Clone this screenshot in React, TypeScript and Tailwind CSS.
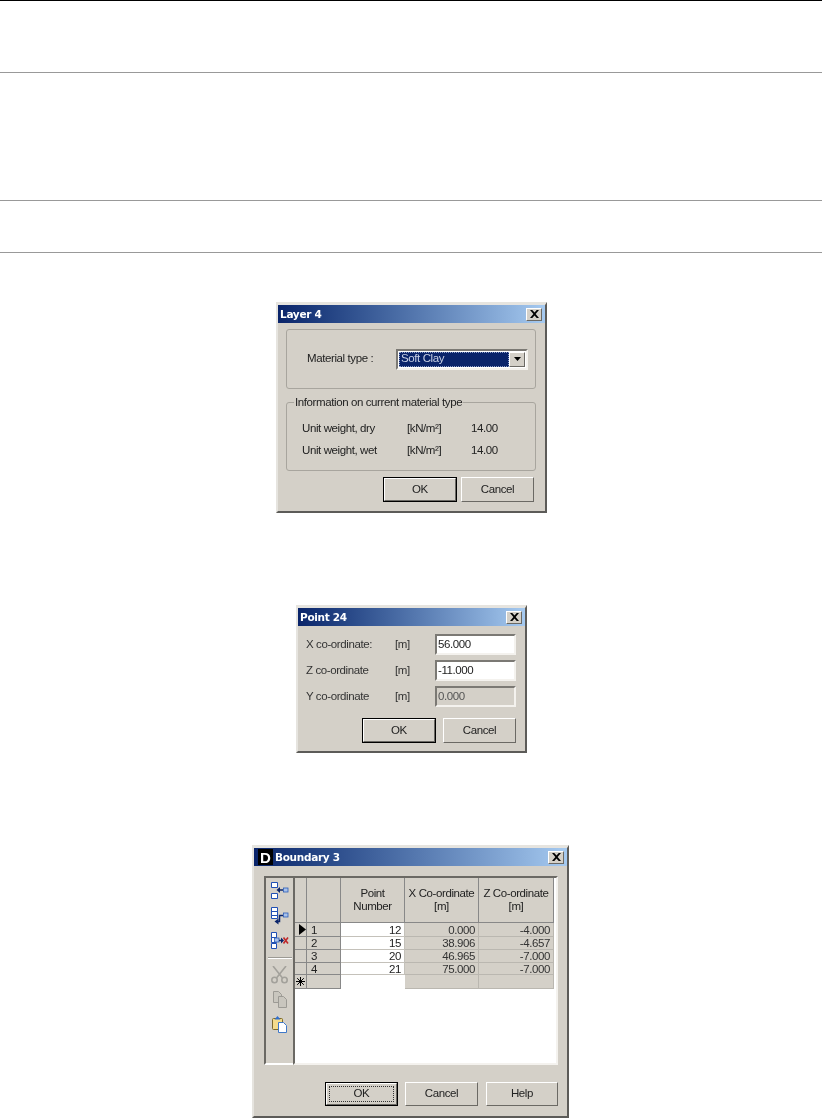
const face = "font-['Liberation_Sans',Arial,sans-serif] blur-[0.4px]";
const label = "text-[11.5px] leading-none tracking-[-0.4px]";

// classic win2k raised / sunken edges
const raised =
  "border border-t-white border-l-white border-r-[#6b6964] border-b-[#6b6964] bg-[#d4d0c8]";
const sunken =
  "border-2 border-t-[#7b7974] border-l-[#7b7974] border-r-[#f4f2ee] border-b-[#f4f2ee]";
const frame =
  "border-2 border-t-[3px] border-t-[#e6e4df] border-l-[#e6e4df] border-r-[#5c5b58] border-b-[#5c5b58] bg-[#d4d0c8]";

const Rule = ({ className }: { className: string }) => (
  <div className={`h-px bg-[#999999] ${className}`} />
);

const TitleBar = ({ title, logo }: { title: string; logo?: boolean }) => (
  <div className={`flex h-[18px] items-center bg-gradient-to-r from-[#0a246a] to-[#a6caf0] pr-[3px] ${logo ? "pl-[4px]" : "pl-[2px]"}`}>
    {logo && (
      <span className="mr-[2px] flex h-[16px] w-[15px] items-center justify-center bg-black text-[15px] font-bold leading-none text-white">
        D
      </span>
    )}
    <span className="flex-1 font-['DejaVu_Sans',Verdana,sans-serif] text-[10.5px] font-bold leading-none tracking-[-0.3px] text-white">
      {title}
    </span>
    <span className={`flex h-[13px] w-[16px] items-center justify-center ${raised}`}>
      <svg width="9" height="8" viewBox="0 0 8 7">
        <path d="M0 0l2 0 2 2.200 2-2.200 2 0-3 3.500 3 3.500-2 0-2-2.200-2 2.200-2 0 3-3.500z" fill="#000" />
      </svg>
    </span>
  </div>
);

const Button = ({ text, className, isDefault, focus }: { text: string; className: string; isDefault?: boolean; focus?: boolean }) => (
  <div className={`text-[#222] ${label} ${className} ${isDefault ? "border border-black" : ""}`}>
    <div className={`flex h-full w-full items-center justify-center ${raised}`}>
      {focus ? (
        <div className="flex h-[16px] w-[65px] items-center justify-center border border-dotted border-[#333]">{text}</div>
      ) : (
        text
      )}
    </div>
  </div>
);

const Field = ({ value, disabled }: { value: string; disabled?: boolean }) => (
  <div
    className={`flex h-[21px] w-[81px] items-center pl-[1px] ${sunken} ${
      disabled ? "bg-[#d4d0c8] text-[#555]" : "bg-white text-[#222]"
    }`}
  >
    {value}
  </div>
);

const LayerDialog = () => (
  <div className={`ml-[276px] mt-[49px] h-[211px] w-[271px] ${frame} ${face}`}>
    <TitleBar title="Layer 4" />
    <div className={`pl-2 pr-[9px] pt-[6px] text-[#222] ${label}`}>
      <div className="flex h-[60px] items-center rounded-[3px] border border-[#a8a59e] pl-[20px] pr-[7px]">
        <span className="w-[89px]">Material type :</span>
        <div className={`flex h-[21px] flex-1 items-center bg-white p-px ${sunken}`}>
          <span className="flex h-full flex-1 items-center border border-dotted border-[#8e9fc8] bg-[#0a246a] pl-px text-[#c8d0e4]">Soft Clay</span>
          <span className={`flex h-full w-[16px] items-center justify-center ${raised}`}>
            <svg width="7" height="4" viewBox="0 0 7 4">
              <path d="M0 0h7l-3.500 4z" fill="#000" />
            </svg>
          </span>
        </div>
      </div>
      <div className="relative mt-[13px] flex h-[69px] flex-col justify-end gap-[9px] rounded-[3px] border border-[#a8a59e] pb-[13px] pl-[15px]">
        <span className="absolute -top-[6px] left-[7px] bg-[#d4d0c8] px-px">Information on current material type</span>
        {["dry", "wet"].map((kind) => (
          <div key={kind} className="flex h-[13px] items-center">
            <span className="w-[105px]">Unit weight, {kind}</span>
            <span className="w-[64px]">[kN/m²]</span>
            <span>14.00</span>
          </div>
        ))}
      </div>
      <div className="mt-[6px] flex justify-end gap-[4px] pr-[2px]">
        <Button text="OK" className="h-[25px] w-[74px]" isDefault />
        <Button text="Cancel" className="h-[25px] w-[73px]" />
      </div>
    </div>
  </div>
);

const PointRow = ({ name, value, disabled }: { name: string; value: string; disabled?: boolean }) => (
  <div className="flex h-[21px] items-center">
    <span className="w-[89px]">{name}</span>
    <span className="w-[40px]">[m]</span>
    <Field value={value} disabled={disabled} />
  </div>
);

const PointDialog = () => (
  <div className={`ml-[296px] mt-[92px] h-[148px] w-[231px] ${frame} ${face}`}>
    <TitleBar title="Point 24" />
    <div className={`pl-[8px] pr-[9px] pt-[8px] text-[#333] ${label}`}>
      <div className="flex flex-col gap-[5px]">
        <PointRow name="X co-ordinate:" value="56.000" />
        <PointRow name="Z co-ordinate" value="-11.000" />
        <PointRow name="Y co-ordinate" value="0.000" disabled />
      </div>
      <div className="mt-[11px] flex justify-end gap-[7px]">
        <Button text="OK" className="h-[25px] w-[74px]" isDefault />
        <Button text="Cancel" className="h-[25px] w-[73px]" />
      </div>
    </div>
  </div>
);

const Hatch = ({ x, y }: { x: number; y: number }) => (
  <rect x={x} y={y} width="4.500" height="4" fill="#a9c2ea" stroke="#2b5cb8" strokeWidth=".8" />
);

const tools = [
  <svg key="a" width="18" height="18" viewBox="0 0 18 18" fill="#fff" stroke="#1f4fb4">
    <path d="M.500 .500h6v5h-6zM.500 11.500h6v5h-6z" />
    <Hatch x={12.500} y={6} />
    <path d="M12 8H8" fill="none" stroke="#0a246a" strokeWidth="1.500" />
    <path d="M9 5l-3.500 3 3.500 3z" fill="#0a246a" stroke="none" />
  </svg>,
  <svg key="b" width="18" height="18" viewBox="0 0 18 18" fill="#fff" stroke="#1f4fb4">
    <path d="M.500 .500h6v4h-6zM.500 4.500h6v4h-6zM.500 8.500h6v3h-6z" />
    <Hatch x={12.500} y={6} />
    <path d="M12 8.500H8.500v6H6" fill="none" stroke="#0a246a" strokeWidth="1.500" />
    <path d="M7.500 11.500l-4 3 4 3z" fill="#0a246a" stroke="none" />
  </svg>,
  <svg key="c" width="18" height="18" viewBox="0 0 18 18" fill="#fff" stroke="#1f4fb4">
    <path d="M.500 .500h5v5h-5zM.500 5.500h5v5h-5zM.500 11.500h5v5h-5z" />
    <Hatch x={3.500} y={6} />
    <path d="M8 8.500h3" fill="none" stroke="#0a246a" strokeWidth="1.500" />
    <path d="M10 5.500l3 3-3 3z" fill="#0a246a" stroke="none" />
    <path d="M12.500 5.500l4.500 6M17 5.500l-4.500 6" fill="none" stroke="#c0282a" strokeWidth="1.600" />
  </svg>,
];

const Scissors = () => (
  <svg width="17" height="18" viewBox="0 0 17 18" fill="none" stroke="#a3a19b" strokeWidth="1.600">
    <path d="M2 0l9.500 12M15 0L5.500 12" />
    <circle cx="3.500" cy="14" r="2.700" />
    <circle cx="13.500" cy="14" r="2.700" />
  </svg>
);

const CopyIcon = () => (
  <svg width="16" height="17" viewBox="0 0 16 17" fill="#c9c6be" stroke="#9c9a94">
    <path d="M1.500 .500h5l3 3v8h-8z" />
    <path d="M6.500 5.500h5l3 3v8h-8z" />
  </svg>
);

const PasteIcon = () => (
  <svg width="16" height="17" viewBox="0 0 16 17">
    <rect x=".500" y="2.500" width="10" height="11" rx="1" fill="#f5dc8c" stroke="#7d6a2c" />
    <path d="M2.500 3.500l3-3.500 3 3.500z" fill="#2f6fd0" />
    <path d="M6.500 6.500h5l3 3v7h-8z" fill="#fff" stroke="#3f78c8" />
  </svg>
);

const Star = () => (
  <svg width="9" height="9" viewBox="0 0 9 9" stroke="#000" strokeWidth="1">
    <path d="M4.500 0v9M0 4.500h9M1.200 1.200l6.600 6.600M7.800 1.200L1.200 7.800" />
  </svg>
);

const rows = [
  { n: "1", p: "12", x: "0.000", z: "-4.000", active: true },
  { n: "2", p: "15", x: "38.906", z: "-4.657" },
  { n: "3", p: "20", x: "46.965", z: "-7.000" },
  { n: "4", p: "21", x: "75.000", z: "-7.000" },
];

const head = "border-r border-b border-[#888] bg-[#d4d0c8]";
const readOnly = "flex items-center justify-end border-r border-b border-[#bab7b0] bg-[#d4d0c8] pr-[3px] pt-[2px] text-[#333]";

const BoundaryDialog = () => (
  <div className={`ml-[252px] mt-[92px] h-[273px] w-[317px] ${frame} ${face}`}>
    <TitleBar title="Boundary 3" logo />
    <div className={`flex pl-[10px] pt-[10px] text-[#222] ${label}`}>
      <div className="flex h-[189px] w-[29px] flex-col items-center border-2 border-r-0 border-t-[#6b6964] border-l-[#6b6964] border-b-white pt-[4px]">
        {tools.map((icon, i) => (
          <div key={i} className="h-[25px]">{icon}</div>
        ))}
        <div className="mb-[7px] h-[2px] w-[24px] border-t border-b border-t-[#9c9a94] border-b-white" />
        <div className="h-[25px]"><Scissors /></div>
        <div className="h-[25px]"><CopyIcon /></div>
        <div className="h-[25px]"><PasteIcon /></div>
      </div>
      <div className="h-[189px] w-[265px] border-2 border-t-[#6b6964] border-l-[#6b6964] border-r-[#f4f2ee] border-b-[#f4f2ee] bg-white">
        <div className="grid grid-cols-[12px_34px_64px_74px_75px] grid-rows-[45px_14px_13px_13px_12px_14px]">
          <div className={head} />
          <div className={head} />
          <div className={`flex items-center justify-center text-center leading-[13px] ${head}`}>
            Point<br />Number
          </div>
          <div className={`flex items-center justify-center text-center leading-[13px] ${head}`}>
            X Co-ordinate<br />[m]
          </div>
          <div className={`flex items-center justify-center text-center leading-[13px] ${head}`}>
            Z Co-ordinate<br />[m]
          </div>
          {rows.map((r) => (
            <div key={r.n} className="contents">
              <div className={`flex items-center justify-end ${head}`}>
                {r.active && (
                  <svg width="7" height="11" viewBox="0 0 7 11">
                    <path d="M0 0l7 5.500-7 5.500z" fill="#000" />
                  </svg>
                )}
              </div>
              <div className={`flex items-center pl-[4px] pt-[2px] ${head}`}>{r.n}</div>
              <div className="flex items-center justify-end border-r border-b border-[#c4c1ba] bg-white pr-[3px] pt-[2px]">{r.p}</div>
              <div className={readOnly}>{r.x}</div>
              <div className={readOnly}>{r.z}</div>
            </div>
          ))}
          <div className={`flex items-center justify-center ${head}`}>
            <Star />
          </div>
          <div className={head} />
          <div className="bg-white" />
          <div className={readOnly} />
          <div className={readOnly} />
        </div>
      </div>
    </div>
    <div className="mt-[17px] flex pl-[71px]">
      <Button text="OK" className="h-[24px] w-[73px]" isDefault focus />
      <Button text="Cancel" className="ml-[7px] h-[24px] w-[73px]" />
      <Button text="Help" className="ml-[8px] h-[24px] w-[72px]" />
    </div>
  </div>
);

export default function App() {
  return (
    <div className="h-[1120px] w-[822px] overflow-hidden bg-white">
      <div className="h-px bg-black" />
      <Rule className="mt-[71px]" />
      <Rule className="mt-[127px]" />
      <Rule className="mt-[51px]" />
      <LayerDialog />
      <PointDialog />
      <BoundaryDialog />
    </div>
  );
}
